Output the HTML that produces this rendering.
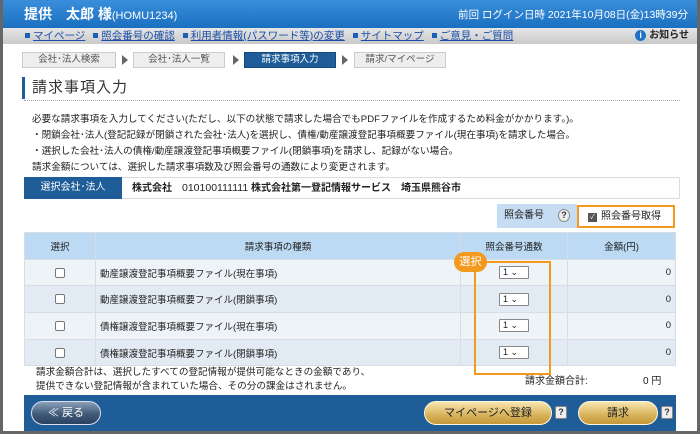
<!DOCTYPE html>
<html><head><meta charset="utf-8"><style>
*{box-sizing:border-box;margin:0;padding:0}
body{width:700px;height:434px;overflow:hidden;background:#fff;font-family:"Liberation Sans","Noto Sans CJK JP",sans-serif;color:#222;position:relative}
.a{position:absolute}
.frame{left:0;top:0;width:700px;height:434px;border:3px solid #666;border-top:none}
.hdr{left:0;top:0;width:700px;height:28px;background:linear-gradient(#3a8fdc,#1b6fc0);color:#fff}
.nav{left:3px;top:28px;width:694px;height:16px;background:linear-gradient(#e6e6e6,#c9c9c9);font-size:10.5px;line-height:14px}
.nav span{color:#1a4fa8;text-decoration:underline;margin-right:8px}
.nav i{display:inline-block;width:5px;height:5px;background:#1a5fb8;margin:0 3px 1px 0}
.bc{top:52px;height:16px;font-size:9.5px;line-height:14px;text-align:center;border:1px solid #ccc;background:#eee;color:#555}
.arr{top:55px;width:0;height:0;border-left:6px solid #666;border-top:5px solid transparent;border-bottom:5px solid transparent}
.p{font-size:9.6px;left:32px;white-space:nowrap;line-height:12px}
table{border-collapse:collapse;font-size:9.5px}
td{border:1px solid #d8dde3;height:26.7px}
.btn{border-radius:14px;font-size:11px;text-align:center;line-height:22px}
.q{width:12px;height:13px;background:#eee;border:1px solid #888;border-radius:2px;font-size:9px;line-height:11px;text-align:center;color:#333;font-weight:bold}
.sel{width:30px;height:13px;border:1px solid #888;background:#fff;font-size:9px;line-height:11px;padding-left:3px;border-radius:1px;margin:auto}
.cb{width:10px;height:10px;border:1px solid #777;border-radius:2px;background:#fff;margin:auto}
</style></head><body>
<div class="a hdr"><div class="a" style="left:24px;top:5px;font-size:14px;font-weight:bold;line-height:18px">提供　太郎 様<span style="font-size:11px;font-weight:normal">(HOMU1234)</span></div>
<div class="a" style="right:12px;top:9px;font-size:10.5px;line-height:13px">前回 ログイン日時 2021年10月08日(金)13時39分</div></div>
<div class="a nav"><div class="a" style="left:22px;top:1px;white-space:nowrap"><i></i><span>マイページ</span><i></i><span>照会番号の確認</span><i></i><span>利用者情報(パスワード等)の変更</span><i></i><span>サイトマップ</span><i></i><span>ご意見・ご質問</span></div>
<div class="a" style="right:8px;top:1px;font-weight:bold;font-size:10px"><b style="display:inline-block;width:11px;height:11px;border-radius:50%;background:#1f72c9;color:#fff;text-align:center;font-size:9px;line-height:11px;margin-right:3px">i</b>お知らせ</div></div>
<div class="a bc" style="left:22px;width:94px">会社･法人検索</div>
<div class="a arr" style="left:122px"></div>
<div class="a bc" style="left:133px;width:92px">会社･法人一覧</div>
<div class="a arr" style="left:233px"></div>
<div class="a bc" style="left:244px;width:92px;background:#1e5d98;color:#fff;border-color:#154a7a">請求事項入力</div>
<div class="a arr" style="left:342px"></div>
<div class="a bc" style="left:354px;width:92px">請求/マイページ</div>
<div class="a" style="left:22px;top:77px;width:3px;height:22px;background:#1e5d98"></div>
<div class="a" style="left:32px;top:79px;font-size:15px;color:#333;letter-spacing:1px;line-height:18px">請求事項入力</div>
<div class="a" style="left:24px;top:100px;width:656px;border-top:1px dotted #aab"></div>
<div class="a p" style="top:114px">必要な請求事項を入力してください(ただし、以下の状態で請求した場合でもPDFファイルを作成するため料金がかかります。)。</div>
<div class="a p" style="top:130px">・閉鎖会社･法人(登記記録が閉鎖された会社･法人)を選択し、債権/動産譲渡登記事項概要ファイル(現在事項)を請求した場合。</div>
<div class="a p" style="top:146px">・選択した会社･法人の債権/動産譲渡登記事項概要ファイル(閉鎖事項)を請求し、記録がない場合。</div>
<div class="a p" style="top:162px">請求金額については、選択した請求事項数及び照会番号の通数により変更されます。</div>
<div class="a" style="left:24px;top:177px;width:656px;height:22px;border:1px solid #d8dde3"></div>
<div class="a" style="left:24px;top:177px;width:98px;height:22px;background:#1e5d98;color:#fff;font-size:10px;line-height:22px;text-align:center">選択会社･法人</div>
<div class="a" style="left:132px;top:182px;font-size:10px;font-weight:bold;white-space:nowrap;line-height:12px">株式会社　<span style="font-weight:normal;font-size:10.5px">010100111111</span> 株式会社第一登記情報サービス　埼玉県熊谷市</div>
<div class="a" style="left:497px;top:204px;width:80px;height:24px;background:#c6dcf2"></div>
<div class="a" style="left:504px;top:210px;font-size:10px;line-height:12px">照会番号</div>
<div class="a q" style="left:558px;top:209px;border-radius:50%">?</div>
<div class="a" style="left:577px;top:205px;width:98px;height:23px;border:2px solid #f39a1e;font-size:10px;line-height:19px;padding-left:9px"><span style="display:inline-block;width:9px;height:9px;background:#555;color:#fff;font-size:7px;line-height:9px;text-align:center;margin-right:4px">✓</span>照会番号取得</div>
<table class="a" style="left:24px;top:232px;width:652px">
<tr style="background:#bcdaf3;height:26px"><td style="width:71px;text-align:center">選択</td><td style="width:365px;text-align:center">請求事項の種類</td><td style="width:107px;text-align:center">照会番号通数</td><td style="text-align:center">金額(円)</td></tr>
<tr style="background:#eef3f8"><td><div class="cb"></div></td><td style="padding-left:4px">動産譲渡登記事項概要ファイル(現在事項)</td><td><div class="sel">1 ⌄</div></td><td style="text-align:right;padding-right:4px">0</td></tr>
<tr style="background:#e2ebf4"><td><div class="cb"></div></td><td style="padding-left:4px">動産譲渡登記事項概要ファイル(閉鎖事項)</td><td><div class="sel">1 ⌄</div></td><td style="text-align:right;padding-right:4px">0</td></tr>
<tr style="background:#eef3f8"><td><div class="cb"></div></td><td style="padding-left:4px">債権譲渡登記事項概要ファイル(現在事項)</td><td><div class="sel">1 ⌄</div></td><td style="text-align:right;padding-right:4px">0</td></tr>
<tr style="background:#e2ebf4"><td><div class="cb"></div></td><td style="padding-left:4px">債権譲渡登記事項概要ファイル(閉鎖事項)</td><td><div class="sel">1 ⌄</div></td><td style="text-align:right;padding-right:4px">0</td></tr>
</table>
<div class="a" style="left:474px;top:261px;width:77px;height:114px;border:2px solid #f39a1e"></div>
<div class="a" style="left:454px;top:252px;width:33px;height:20px;border-radius:10px;background:#f39a1e;color:#fff;font-size:11px;line-height:20px;text-align:center">選択</div>
<div class="a p" style="left:36px;top:367px">請求金額合計は、選択したすべての登記情報が提供可能なときの金額であり、</div>
<div class="a p" style="left:36px;top:381px">提供できない登記情報が含まれていた場合、その分の課金はされません。</div>
<div class="a" style="left:525px;top:376px;font-size:10px;line-height:12px">請求金額合計:</div>
<div class="a" style="left:643px;top:376px;font-size:10px;line-height:12px">0 円</div>
<div class="a" style="left:24px;top:395px;width:652px;height:36px;background:#1e5d98"></div>
<div class="a btn" style="left:31px;top:401px;width:70px;height:24px;background:linear-gradient(#8aa0b8,#3f5a78 55%,#2a4262);color:#fff;border:1px solid #dde">≪ 戻る</div>
<div class="a btn" style="left:424px;top:401px;width:128px;height:24px;background:linear-gradient(#f7e6b0,#d8b25a 60%,#c49838);border:1px solid #fff8e0">マイページへ登録</div>
<div class="a q" style="left:555px;top:406px">?</div>
<div class="a btn" style="left:578px;top:401px;width:80px;height:24px;background:linear-gradient(#f7e6b0,#d8b25a 60%,#c49838);border:1px solid #fff8e0">請求</div>
<div class="a q" style="left:661px;top:406px">?</div>
<div class="a frame"></div>
</body></html>
